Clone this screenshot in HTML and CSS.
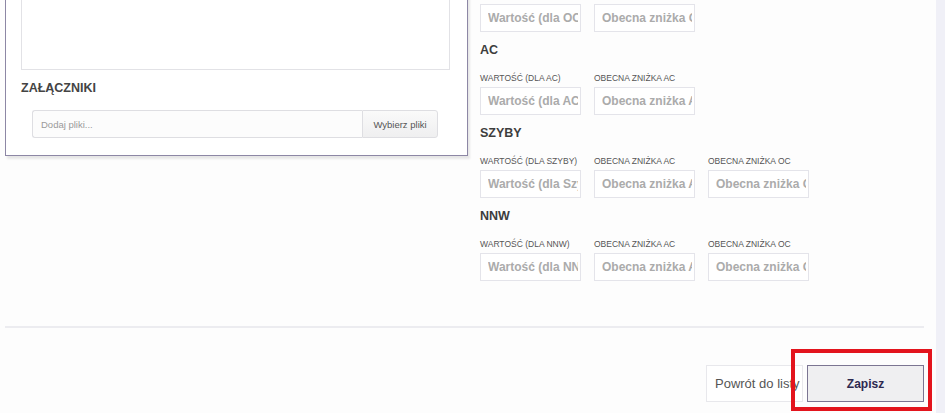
FILE: index.html
```html
<!DOCTYPE html>
<html lang="pl">
<head>
<meta charset="utf-8">
<title>Formularz</title>
<link rel="stylesheet" href="styles.css">
</head>
<body>
<div class="app">
  <main class="main">
    <div class="content">
      <div class="columns">
        <section class="card">
          <textarea class="notes"></textarea>
          <h3 class="card-title">ZAŁĄCZNIKI</h3>
          <div class="file-group">
            <input class="file-input" placeholder="Dodaj pliki..." readonly>
            <span class="file-btn">Wybierz pliki</span>
          </div>
        </section>
        <section class="discounts">
          <div class="group">
            <h3 class="group-title">OC</h3>
            <div class="fields">
              <label class="field"><span class="field-label">WARTOŚĆ (DLA OC)</span><input class="field-input" placeholder="Wartość (dla OC)"></label>
              <label class="field"><span class="field-label">OBECNA ZNIŻKA OC</span><input class="field-input" placeholder="Obecna zniżka OC"></label>
            </div>
          </div>
          <div class="group">
            <h3 class="group-title">AC</h3>
            <div class="fields">
              <label class="field"><span class="field-label">WARTOŚĆ (DLA AC)</span><input class="field-input" placeholder="Wartość (dla AC)"></label>
              <label class="field"><span class="field-label">OBECNA ZNIŻKA AC</span><input class="field-input" placeholder="Obecna zniżka AC"></label>
            </div>
          </div>
          <div class="group">
            <h3 class="group-title">SZYBY</h3>
            <div class="fields">
              <label class="field"><span class="field-label">WARTOŚĆ (DLA SZYBY)</span><input class="field-input" placeholder="Wartość (dla Szyby)"></label>
              <label class="field"><span class="field-label">OBECNA ZNIŻKA AC</span><input class="field-input" placeholder="Obecna zniżka AC"></label>
              <label class="field"><span class="field-label">OBECNA ZNIŻKA OC</span><input class="field-input" placeholder="Obecna zniżka OC"></label>
            </div>
          </div>
          <div class="group">
            <h3 class="group-title">NNW</h3>
            <div class="fields">
              <label class="field"><span class="field-label">WARTOŚĆ (DLA NNW)</span><input class="field-input" placeholder="Wartość (dla NNW)"></label>
              <label class="field"><span class="field-label">OBECNA ZNIŻKA AC</span><input class="field-input" placeholder="Obecna zniżka AC"></label>
              <label class="field"><span class="field-label">OBECNA ZNIŻKA OC</span><input class="field-input" placeholder="Obecna zniżka OC"></label>
            </div>
          </div>
        </section>
      </div>
      <hr class="divider">
      <div class="actions">
        <button class="btn btn-back" type="button">Powrót do listy</button>
        <button class="btn btn-save" type="button">Zapisz</button>
        <span class="highlight"></span>
      </div>
    </div>
  </main>
  <aside class="strip"></aside>
</div>
</body>
</html>
```

FILE: styles.css
```css
html, body {
  margin: 0;
  height: 100%;
  overflow: hidden;
}

body {
  font-family: "Liberation Sans", Arial, sans-serif;
  color: #444;
}

.app {
  display: flex;
  height: 413px;
}

.main {
  width: 936px;
  background: #fdfdfd;
}

.strip {
  flex: 1;
  background: #f0f0f7;
}

.content {
  margin-top: -43px;
  padding: 0 12px 0 5px;
}

.columns {
  display: grid;
  grid-template-columns: 463px 1fr;
  column-gap: 12px;
  align-items: start;
}

/* left card */
.card {
  background: #fff;
  border: 1px solid #8d87a5;
  padding: 15px 17px 17px 15px;
  box-shadow: 2px 3px 2px rgba(0, 0, 0, 0.09);
}

.notes {
  display: block;
  box-sizing: border-box;
  width: 100%;
  height: 97px;
  margin: 0;
  border: 1px solid #e2e2e6;
  background: #fff;
  resize: none;
}

.card-title {
  margin: 9px 0 0;
  font-size: 12.5px;
  line-height: 18px;
  font-weight: bold;
  color: #444;
}

.file-group {
  display: flex;
  height: 28px;
  margin: 13px 12px 0 11px;
}

.file-input {
  flex: 1;
  min-width: 0;
  box-sizing: border-box;
  height: 28px;
  margin: 0;
  border: 1px solid #dedee2;
  border-right: none;
  border-radius: 3px 0 0 3px;
  background: #fcfcfc;
  padding: 0 8px;
  font-family: "Liberation Sans", Arial, sans-serif;
  font-size: 9.5px;
  outline: none;
}

.file-input::placeholder {
  color: #9a9a9a;
}

.file-btn {
  width: 76px;
  box-sizing: border-box;
  display: flex;
  align-items: center;
  justify-content: center;
  border: 1px solid #dedee2;
  border-radius: 0 3px 3px 0;
  background: linear-gradient(#fafafa, #efeff0);
  font-size: 9.5px;
  color: #555;
}

/* right column */
.group {
  margin-bottom: 8px;
}

.group-title {
  margin: 0 0 12px;
  font-size: 12.5px;
  line-height: 20px;
  font-weight: bold;
  color: #3d3d3d;
}

.fields {
  display: flex;
  gap: 13px;
}

.field {
  display: flex;
  flex-direction: column;
  width: 101px;
}

.field-label {
  font-size: 8.5px;
  line-height: 12px;
  color: #555;
  margin-bottom: 3px;
  white-space: nowrap;
}

.field-input {
  box-sizing: border-box;
  width: 101px;
  height: 28px;
  margin: 0;
  border: 1px solid #e4e4ea;
  background: #fff;
  padding: 0 2px 0 7px;
  font-family: "Liberation Sans", Arial, sans-serif;
  font-size: 12px;
  font-weight: bold;
  outline: none;
}

.field-input::placeholder {
  color: #ababab;
}

/* footer */
.divider {
  margin: 37px 0 0;
  border: none;
  height: 2px;
  background: #ececf0;
}

.actions {
  position: relative;
  display: flex;
  justify-content: flex-end;
  align-items: flex-start;
  gap: 4px;
  margin-top: 37px;
}

.btn {
  box-sizing: border-box;
  height: 37px;
  margin: 0;
  font-family: "Liberation Sans", Arial, sans-serif;
  cursor: pointer;
}

.btn-back {
  width: 97px;
  padding: 0 0 0 8px;
  text-align: left;
  white-space: nowrap;
  overflow: hidden;
  border: 1px solid #e8e8ec;
  background: #fff;
  font-size: 13px;
  color: #555;
}

.btn-save {
  width: 117px;
  border: 1px solid #7b7592;
  background: #efeff1;
  font-size: 12px;
  font-weight: bold;
  color: #2d2950;
}

.highlight {
  position: absolute;
  top: -16px;
  right: -8px;
  width: 141px;
  height: 62px;
  box-sizing: border-box;
  border: 4px solid #e3141d;
  pointer-events: none;
}
```
